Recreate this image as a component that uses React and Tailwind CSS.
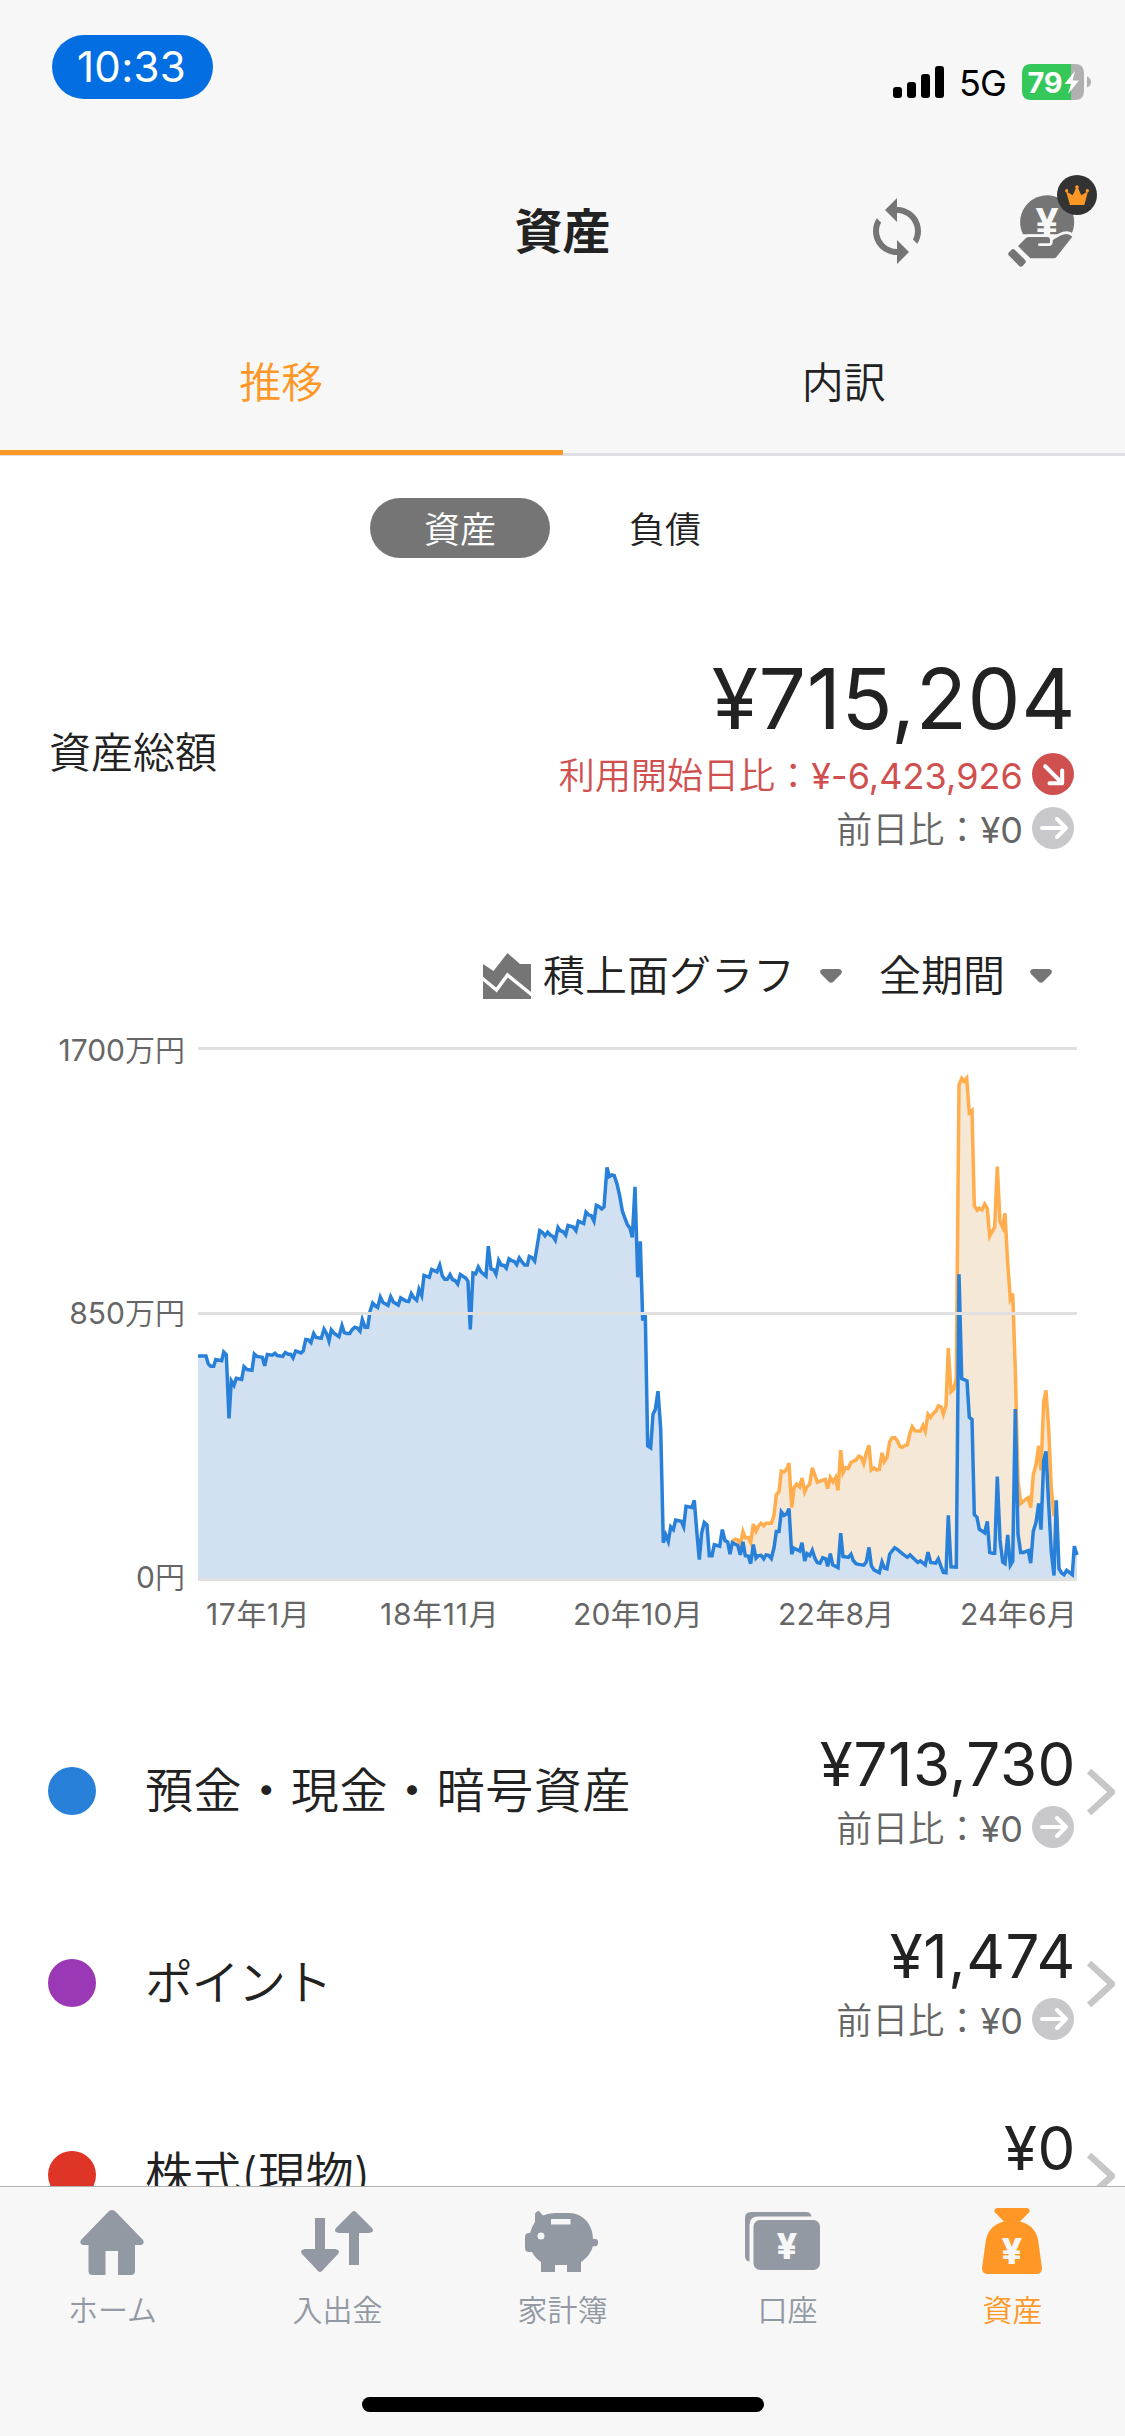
import { useState } from 'react';

// Chart samples as x,y pairs. The second half is counted from LATE_X.
const LATE_X = 1350;

const depositEarly = [
  24, 825, 48, 825, 55, 845, 62, 851, 71, 851, 77, 834, 95, 837, 101, 815, 109, 822, 117, 983, 124, 888, 132, 899,
  139, 881, 155, 884, 162, 852, 171, 859, 186, 861, 193, 820, 201, 826, 217, 828, 224, 850, 232, 821, 247, 823,
  255, 818, 262, 824, 278, 826, 286, 816, 294, 820, 302, 821, 309, 830, 317, 812, 333, 817, 340, 812, 347, 783,
  355, 784, 363, 791, 371, 768, 378, 778, 394, 780, 402, 757, 410, 769, 417, 787, 424, 759, 432, 767, 447, 776,
  456, 748, 463, 766, 471, 768, 479, 768, 486, 759, 494, 752, 502, 754, 510, 762, 517, 733, 525, 752, 533, 752,
  540, 712, 548, 691, 556, 698, 563, 702, 571, 676, 579, 690, 594, 697, 602, 675, 610, 688, 625, 696, 632, 678,
  648, 686, 656, 687, 664, 667, 672, 678, 680, 684, 687, 656, 695, 672, 702, 621, 718, 626, 725, 606, 741, 612,
  749, 595, 757, 622, 764, 631, 772, 631, 780, 619, 788, 632, 795, 634, 803, 643, 811, 619, 827, 628, 834, 636,
  841, 758, 849, 615, 857, 617, 865, 600, 873, 612, 888, 623, 895, 547, 903, 605, 911, 607, 918, 618, 926, 583,
  934, 595, 942, 596, 949, 603, 957, 579, 965, 584, 973, 586, 980, 594, 988, 577, 996, 587, 1004, 595, 1012, 595,
  1018, 573, 1026, 576, 1034, 585, 1042, 545, 1049, 508, 1057, 512, 1065, 521, 1073, 512, 1081, 519, 1089, 523,
  1096, 532, 1104, 500, 1111, 508, 1119, 510, 1127, 519, 1134, 495, 1150, 499, 1158, 508, 1165, 484, 1181, 490,
  1188, 461, 1196, 468, 1204, 470, 1212, 484, 1219, 444, 1227, 447, 1235, 453, 1242, 448, 1251, 348, 1258, 371,
  1266, 367, 1273, 369, 1281, 390, 1289, 420, 1297, 458, 1304, 475, 1312, 492, 1320, 502, 1327, 525, 1335, 397,
  1343, 626, 1351, 535, 1358, 735, 1366, 722,
];

const depositLate = [
  23, 1052, 32, 1057, 39, 972, 46, 960, 54, 914, 62, 1010, 70, 1297, 77, 1277, 85, 1294, 92, 1257, 100, 1264,
  107, 1240, 124, 1243, 131, 1257, 138, 1205, 156, 1208, 163, 1190, 171, 1275, 178, 1340, 185, 1272, 193, 1246,
  201, 1252, 208, 1330, 216, 1330, 223, 1302, 239, 1306, 247, 1264, 255, 1292, 263, 1295, 270, 1326, 277, 1297,
  293, 1304, 301, 1328, 309, 1295, 316, 1330, 325, 1331, 332, 1350, 340, 1302, 348, 1336, 355, 1330, 363, 1329,
  371, 1338, 378, 1328, 386, 1329, 394, 1337, 402, 1310, 409, 1269, 417, 1269, 424, 1219, 432, 1228, 440, 1224,
  447, 1211, 455, 1326, 462, 1311, 479, 1318, 486, 1297, 494, 1343, 501, 1325, 509, 1330, 517, 1316, 525, 1337,
  532, 1347, 540, 1349, 548, 1335, 557, 1338, 563, 1357, 571, 1325, 578, 1353, 594, 1360, 602, 1273, 609, 1332,
  625, 1334, 633, 1326, 640, 1342, 648, 1350, 656, 1352, 671, 1354, 679, 1346, 687, 1309, 694, 1355, 702, 1366,
  718, 1373, 726, 1346, 733, 1361, 741, 1363, 749, 1326, 756, 1318, 764, 1310, 772, 1314, 787, 1325, 802, 1334,
  810, 1328, 826, 1341, 833, 1347, 841, 1343, 856, 1353, 864, 1321, 872, 1347, 887, 1349, 895, 1338, 903, 1357,
  910, 1372, 918, 1373, 925, 1228, 933, 1358, 949, 1359, 957, 618, 965, 882, 981, 888, 988, 980, 996, 985,
  1003, 1226, 1011, 1233, 1018, 1263, 1034, 1272, 1042, 1243, 1049, 1322, 1057, 1324, 1064, 1324, 1072, 1130,
  1080, 1290, 1088, 1346, 1095, 1350, 1103, 1277, 1111, 1354, 1118, 1344, 1126, 959, 1134, 1275, 1142, 1322,
  1150, 1322, 1165, 1317, 1172, 1349, 1180, 1268, 1188, 1246, 1196, 1198, 1203, 1264, 1211, 1090, 1218, 1066,
  1226, 1200, 1234, 1320, 1242, 1380, 1249, 1190, 1257, 1363, 1265, 1374, 1272, 1378, 1280, 1367, 1297, 1378,
  1303, 1306, 1311, 1328,
];

const totalLate = [
  277, 1293, 286, 1288, 293, 1290, 301, 1302, 309, 1269, 316, 1285, 325, 1284, 332, 1297, 340, 1250, 348, 1268,
  355, 1256, 363, 1248, 371, 1254, 378, 1248, 394, 1248, 402, 1228, 409, 1176, 417, 1168, 424, 1116, 432, 1118,
  440, 1111, 447, 1096, 455, 1208, 462, 1158, 470, 1149, 479, 1156, 486, 1134, 494, 1169, 501, 1156, 509, 1149,
  517, 1108, 532, 1144, 556, 1137, 563, 1160, 571, 1132, 579, 1143, 587, 1132, 594, 1165, 602, 1063, 609, 1120,
  617, 1107, 625, 1109, 633, 1094, 648, 1088, 656, 1078, 664, 1081, 671, 1097, 679, 1070, 687, 1051, 694, 1113,
  702, 1108, 710, 1113, 718, 1112, 726, 1070, 733, 1092, 741, 1081, 749, 1042, 756, 1032, 764, 1031, 772, 1039,
  780, 1054, 787, 1056, 795, 1051, 802, 1050, 810, 1020, 817, 1004, 825, 1014, 841, 1015, 849, 1001, 856, 1015,
  864, 972, 872, 980, 880, 970, 887, 965, 895, 951, 903, 953, 910, 972, 918, 950, 925, 805, 933, 915, 941, 908,
  949, 882, 957, 140, 965, 123, 972, 130, 980, 122, 988, 210, 996, 204, 1003, 445, 1011, 456, 1018, 451,
  1026, 455, 1034, 441, 1042, 452, 1049, 522, 1057, 510, 1064, 498, 1072, 346, 1080, 485, 1088, 500, 1095, 464,
  1103, 590, 1111, 680, 1118, 667, 1126, 860, 1134, 1140, 1142, 1198, 1150, 1192, 1165, 1183, 1172, 1208,
  1180, 1125, 1188, 1100, 1196, 1052, 1203, 1114, 1211, 940, 1218, 912, 1226, 1010, 1234, 1160, 1242, 1230,
  1249, 1190,
];

// Scales raw samples to the 879x531 plot
const toPoints = (values, dx = 0) => {
  const points = [];
  for (let i = 0; i < values.length; i += 2) {
    points.push(`${((values[i] + dx - 24) / 3).toFixed(1)},${((values[i + 1] - 46) / 2.529).toFixed(1)}`);
  }
  return points.join(' ');
};

const depositPoints = `${toPoints(depositEarly)} ${toPoints(depositLate, LATE_X)}`;
const totalPoints = toPoints(totalLate, LATE_X);

const accounts = [
  { name: '預金・現金・暗号資産', amount: '¥713,730', diff: '¥0', dot: 'bg-[#2980d9]', tracking: 'tracking-[0.6px]' },
  { name: 'ポイント', amount: '¥1,474', diff: '¥0', dot: 'bg-[#9b38b5]', tracking: 'tracking-[-1.5px]' },
  { name: '株式(現物)', amount: '¥0', dot: 'bg-[#df3526]', tracking: 'tracking-normal' },
];

function StatusBar() {
  return (
    <div className="flex h-[132px] items-start justify-between pl-[52px] pr-[34px] text-black">
      <div className="mt-[35px] flex h-16 w-[161px] items-center justify-center rounded-full bg-[#036ee2] pr-[2px] text-[42px] leading-none tracking-[0.3px] text-white">
        10:33
      </div>
      <div className="mt-16 flex h-9 items-center">
        <svg className="h-8 w-[51px]" viewBox="0 0 51 32">
          <rect x="0" y="21" width="9" height="11" rx="3" />
          <rect x="14" y="16" width="9" height="16" rx="3" />
          <rect x="28" y="8" width="9" height="24" rx="3" />
          <rect x="42" y="0" width="9" height="32" rx="3" />
        </svg>
        <span className="ml-[15px] w-[63px] pt-[2px] text-[36px] leading-none tracking-[-1px]">5G</span>
        <svg className="h-9 w-[69px]" viewBox="0 0 69 36">
          <path d="M9 0H49V36H9Q0 36 0 27V9Q0 0 9 0Z" fill="#34c759" />
          <path d="M49 0H53Q62 0 62 9V27Q62 36 53 36H49Z" fill="#b0b0b0" />
          <path d="M65 12.500Q69 14 69 18T65 23.500Z" fill="#b0b0b0" />
          <path d="M53 7L42.500 20H49L46 30L57 16.500H50.500Z" fill="#fff" />
          <text x="5.500" y="28.500" className="text-[29px] font-bold" fill="#fff" textLength="35">79</text>
        </svg>
      </div>
    </div>
  );
}

function SyncIcon() {
  return (
    <svg className="mb-[3px] h-[66px] w-12" viewBox="4 1 16 22" fill="#757575">
      <path d="M12 4V1L8 5l4 4V6c3.310 0 6 2.690 6 6 0 1.010-.25 1.970-.7 2.800l1.460 1.460C19.540 15.030 20 13.570 20 12c0-4.420-3.580-8-8-8zm0 14c-3.310 0-6-2.690-6-6 0-1.010.25-1.970.7-2.800L5.240 7.740C4.460 8.970 4 10.430 4 12c0 4.420 3.580 8 8 8v3l4-4-4-4v3z" />
    </svg>
  );
}

function PremiumIcon() {
  return (
    <svg className="h-[92px] w-[89px]" viewBox="504 404 267 276">
      <path d="M549 582A81 81 0 1 1 694 582Z" fill="#757575" />
      <text x="621" y="592" textAnchor="middle" className="text-[124px] font-bold" fill="#f7f7f7">¥</text>
      <path
        d="M534 617L558 593Q561 590 566 590H622Q630 590 630 598V604L660 586Q684 574 697 589L650 649Q646 654 640 654H571Z"
        fill="#757575"
        stroke="#f7f7f7"
        strokeWidth="15"
        paintOrder="stroke"
      />
      <path d="M598 613H626Q634 613 634 606V596" fill="none" stroke="#f7f7f7" strokeWidth="8" strokeLinecap="round" />
      <rect x="502" y="640" width="58" height="25" rx="8" fill="#757575" transform="rotate(45 531 652.5)" />
      <circle cx="711" cy="464" r="60" fill="#333" />
      <g fill="#ff9726">
        <path d="M690 494L678 453L698 465L709 441H713L724 465L744 453L733 494Z" />
        <circle cx="711" cy="440" r="5.500" />
        <circle cx="680" cy="451" r="5" />
        <circle cx="742" cy="451" r="5" />
      </g>
    </svg>
  );
}

function Header() {
  return (
    <div className="grid h-[198px] grid-cols-3 items-center">
      <div />
      <h1 className="pt-[2px] text-center text-[48px] leading-none font-bold">資産</h1>
      <div className="flex items-end justify-end gap-[87px] pr-7 pb-5">
        <SyncIcon />
        <PremiumIcon />
      </div>
    </div>
  );
}

function DiffIcon({ down }) {
  return (
    <svg className="size-[42px]" viewBox="0 0 42 42">
      <circle cx="21" cy="21" r="21" fill={down ? '#d05050' : '#c7c7cc'} />
      <g
        fill="none"
        stroke="#fff"
        strokeWidth="4"
        strokeLinecap="round"
        strokeLinejoin="round"
        transform={down ? 'rotate(45 21 21)' : undefined}
      >
        <path d="M10 21H33" />
        <path d="M25 12L34 21L25 30" />
      </g>
    </svg>
  );
}

function Diff({ label, value, down }) {
  return (
    <div className={`flex h-[42px] items-center gap-[9px] text-[36px] leading-none ${down ? 'text-[#d05050]' : 'text-[#666]'}`}>
      <span className="pt-[3px] tracking-[0.05px]">
        <span className="font-[350]">{label}：</span>
        {value}
      </span>
      <DiffIcon down={down} />
    </div>
  );
}

function Triangle() {
  return (
    <svg className="h-[14px] w-[22px]" viewBox="0 0 22 14" fill="#757575">
      <path d="M3 0H19Q23.500 1 21 5L13.500 12.500Q11 15 8.500 12.500L1 5Q-1.500 1 3 0Z" />
    </svg>
  );
}

function Toolbar() {
  return (
    <div className="mt-[103px] flex h-12 items-center justify-end pr-[73px] text-[42px] leading-none font-[350]">
      <svg className="h-[46px] w-12" viewBox="0 0 48 46">
        <path d="M0 11L10.500 18L24.500 0L37 11H48V46H0Z" fill="#757575" />
        <path d="M-1 25L13.500 37L24.500 22L49 42" fill="none" stroke="#fff" strokeWidth="3.500" />
      </svg>
      <span className="ml-3 mr-[25px]">積上面グラフ</span>
      <Triangle />
      <span className="ml-[37px] mr-[25px]">全期間</span>
      <Triangle />
    </div>
  );
}

function Chart() {
  return (
    <div className="pt-12">
      <div className="flex h-[531px]">
        <div className="flex h-[529px] w-[198px] flex-col justify-between pt-[2px] pr-[13px] text-right text-[30px] text-[#666]">
          <span className="flex h-0 items-center justify-end">1700<span className="font-[350]">万円</span></span>
          <span className="flex h-0 items-center justify-end">850<span className="font-[350]">万円</span></span>
          <span className="flex h-0 items-center justify-end">0<span className="font-[350]">円</span></span>
        </div>
        <svg className="h-[531px] w-[879px] overflow-visible" viewBox="0 0 879 531">
          <polygon points={`${totalPoints} 858.3,531 534.3,531`} fill="#f5e8d6" />
          <polyline points={totalPoints} fill="none" stroke="#ffad4d" strokeWidth="3.500" />
          <polygon points={`${depositPoints} 879,531 0,531`} fill="#d2e1f1" />
          <polyline points={depositPoints} fill="none" stroke="#2980d9" strokeWidth="3.500" />
          <path d="M0 .5H879M0 265.500H879M0 531.500H879" stroke="#e0e0e0" strokeWidth="3" />
        </svg>
      </div>
      <div className="mt-5 grid h-[30px] grid-cols-[174px_193px_205px_182px_1fr] items-center pl-[206px] text-[30px] leading-none tracking-[0.3px] text-[#666]">
        <span className="tracking-[0.6px]">17年1月</span>
        <span className="tracking-[0.7px]">18年11月</span>
        <span>20年10月</span>
        <span>22年8月</span>
        <span>24年6月</span>
      </div>
    </div>
  );
}

function AccountRow({ account }) {
  return (
    <li className="flex h-48 items-center pl-12 pr-[10px]">
      <span className={`size-12 rounded-full ${account.dot}`} />
      <span className={`ml-[49px] flex-1 text-[48px] leading-none font-[350] ${account.tracking}`}>{account.name}</span>
      <div className="flex h-[114px] flex-col items-end gap-3">
        <span className="-mr-[2px] text-[60px] leading-none tracking-[0.6px]">{account.amount}</span>
        {account.diff && <Diff label="前日比" value={account.diff} />}
      </div>
      <svg className="mt-[2px] ml-[13px] h-[46px] w-7" viewBox="0 0 28 46" fill="none" stroke="#c7c7c7" strokeWidth="6.500">
        <path d="M2 2L25 23L2 44" />
      </svg>
    </li>
  );
}

function NavItem({ label, active, children }) {
  return (
    <a className={`flex flex-1 flex-col items-center pt-[21px] ${active ? 'text-[#ff9726]' : 'text-[#9299a3]'}`}>
      <div className="-ml-[2px] flex h-[66px] items-center">{children}</div>
      <span className="mt-[21px] text-[30px] leading-none font-[350]">{label}</span>
    </a>
  );
}

function BottomNav() {
  return (
    <nav className="flex h-[250px] flex-col items-center border-t border-[#b2b2b2] bg-[#f7f7f7]">
      <div className="flex w-full flex-1">
        <NavItem label="ホーム">
          <svg className="mt-[3px] h-[65px] w-16" viewBox="0 0 64 65" fill="currentColor">
            <path d="M29 1Q32 -1 35 1L63 30Q65 34 61 35H55V61Q55 65 51 65H38V41H25.500V65H12.500Q8.500 65 8.500 61V35H3Q-1 34 1 30Z" />
          </svg>
        </NavItem>
        <NavItem label="入出金">
          <svg className="h-[61px] w-[72px]" viewBox="0 0 72 61" fill="currentColor">
            <path d="M14 7H24V38H34Q40 39 37 43L21 60Q19 62 17 60L1 43Q-2 39 4 38H14Z" />
            <path d="M48 54V22H38Q32 21 35 17L51 1Q53 -1 55 1L71 17Q74 21 68 22H58V54Z" />
          </svg>
        </NavItem>
        <NavItem label="家計簿">
          <svg className="h-[61px] w-[73px]" viewBox="0 0 73 61" fill="currentColor">
            <path
              fillRule="evenodd"
              d="M10 11V3Q11 0 14 0L18 4.500Q23 2 30 2H44C58 2 68 14 68 28A3.800 3.800 0 1 1 68 35C66 42 62 47 56 51V61H42V54H30V61H16V51Q10 47 7 41H4Q0 41 0 37V26Q0 22 4 22H5Q7 15 10 11ZM26 8V13.500H45.500V8ZM16 21.500A3.500 3.500 0 1 0 16 28.500A3.500 3.500 0 1 0 16 21.500Z"
            />
          </svg>
        </NavItem>
        <NavItem label="口座">
          <svg className="-ml-[9px] -mt-[1px] h-[58px] w-[75px]" viewBox="0 0 75 58" fill="currentColor">
            <path d="M0 6Q0 0 6 0H61Q66 0 66.500 4.500H13Q4.500 4.500 4.500 13V49.500Q0 49 0 44Z" />
            <rect x="8.500" y="8" width="66.500" height="50" rx="6.500" />
            <text x="41.800" y="46.500" textAnchor="middle" className="text-[36px] font-extrabold" fill="#f7f7f7">¥</text>
          </svg>
        </NavItem>
        <NavItem label="資産" active>
          <svg className="h-[66px] w-[60px]" viewBox="0 0 60 66" fill="currentColor">
            <path d="M15 0H45Q49 1 47 4.500L38 13.500Q55 18 56.500 35L60 60Q60 66 54 66H6Q0 66 0 60L3.500 35Q5 18 22 13.500L13 4.500Q11 1 15 0Z" />
            <text x="30" y="56" textAnchor="middle" className="text-[36px] font-extrabold" fill="#f7f7f7">¥</text>
          </svg>
        </NavItem>
      </div>
      <div className="mb-6 h-[15px] w-[402px] rounded-full bg-black" />
    </nav>
  );
}

export default function App() {
  const [tab, setTab] = useState('推移');
  const [kind, setKind] = useState('資産');

  return (
    <div className="flex h-[2436px] w-[1125px] flex-col overflow-hidden bg-white font-['Inter','Noto_Sans_CJK_JP',sans-serif] font-normal text-[#222]">
      <header className="bg-[#f7f7f7]">
        <StatusBar />
        <Header />
        <div className="flex h-[126px] border-b-[3px] border-[#e0dfe4]">
          {['推移', '内訳'].map((name) => (
            <button
              key={name}
              onClick={() => setTab(name)}
              className={`-mb-[2px] flex-1 border-b-[5px] pb-[14px] text-[42px] leading-none font-[350] ${
                tab === name ? 'border-[#ff9726] text-[#ff9726]' : 'border-transparent'
              }`}
            >
              {name}
            </button>
          ))}
        </div>
      </header>

      <main className="min-h-0 flex-1 overflow-hidden">
        <div className="flex justify-center gap-[25px] pt-[42px]">
          {['資産', '負債'].map((name) => (
            <button
              key={name}
              onClick={() => setKind(name)}
              className={`h-[60px] w-[180px] rounded-full pt-[3px] text-[36px] leading-none font-[350] ${
                kind === name ? 'bg-[#757575] text-white' : ''
              }`}
            >
              {name}
            </button>
          ))}
        </div>

        <div className="mt-[99px] flex items-center justify-between pl-[49px] pr-[51px]">
          <span className="text-[42px] leading-none font-[350]">資産総額</span>
          <div className="flex flex-col items-end gap-3">
            <span className="-mr-[2px] text-[84px] leading-none tracking-[0.6px]">¥715,204</span>
            <Diff label="利用開始日比" value="¥-6,423,926" down />
            <Diff label="前日比" value="¥0" />
          </div>
        </div>

        <Toolbar />
        <Chart />

        <ul className="mt-[66px]">
          {accounts.map((account) => (
            <AccountRow key={account.name} account={account} />
          ))}
        </ul>
      </main>

      <BottomNav />
    </div>
  );
}
